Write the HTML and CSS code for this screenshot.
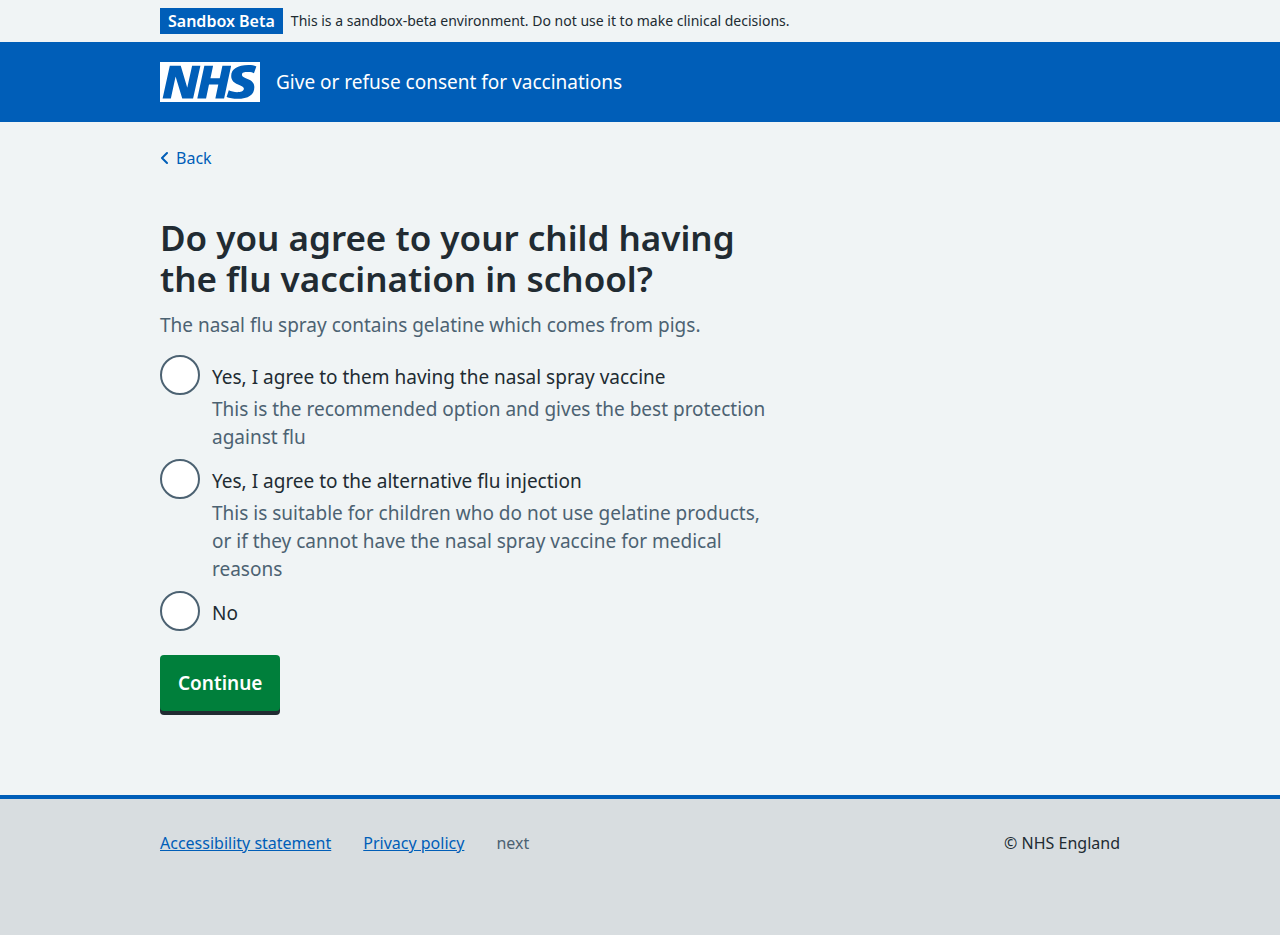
FILE: index.html
```html
<!DOCTYPE html>
<html lang="en">
<head>
<meta charset="utf-8">
<meta name="viewport" content="width=device-width, initial-scale=1">
<title>Give or refuse consent for vaccinations</title>
<link rel="stylesheet" href="styles.css">
</head>
<body>
<aside class="environment">
  <div class="container environment-row">
    <strong class="tag">Sandbox Beta</strong>
    <span>This is a sandbox-beta environment. Do not use it to make clinical decisions.</span>
  </div>
</aside>
<header class="header">
  <div class="container header-row">
    <svg class="logo" viewBox="0 0 200 80" role="img" aria-label="NHS">
      <path fill="#fff" d="M200 0v80H0V0h200Z"/>
      <path fill="#005eb8" d="M192.700 9c-3.600-1.600-8.800-2.800-15.800-2.800-22 0-34.500 8.300-34.500 21.700 0 19 25.400 16.700 25.400 25.300 0 6.100-7.300 7.300-13.500 7.300-5.500 0-12.800-1.700-16.700-3.800l-4.400 13.400c5.300 2.200 14.100 3.600 21.200 3.600 22.700 0 34.300-8.100 34.300-23.700 0-17.500-24.800-15.900-24.800-24.400 0-4.700 4.400-5.500 12.500-5.500 5.800 0 8.900 1 11.500 2.300ZM80.800 7.500H64.200L54.600 51h-.2L41.500 7.500H19.600L5.200 73.200h16.500l9.400-43.600h.2l13.200 43.600h21.700ZM142.300 7.500h-17.500l-5.300 25h-18.600l5.300-25H88.700L74.600 73.200h17.500l5.900-28.200h18.600l-5.900 28.200h17.500Z"/>
    </svg>
    <span class="service">Give or refuse consent for vaccinations</span>
  </div>
</header>
<div class="page">
  <div class="container">
    <a class="back" href="#">
      <svg class="chevron" viewBox="0 0 8 14" aria-hidden="true"><path d="M7 2 2 7l5 5"/></svg>
      Back
    </a>
    <main class="main">
      <form>
        <fieldset class="question" aria-describedby="question-hint">
          <legend><h1>Do you agree to your child having the flu vaccination in school?</h1></legend>
          <p class="hint" id="question-hint">The nasal flu spray contains gelatine which comes from pigs.</p>
          <div class="radios">
            <div class="option">
              <input type="radio" name="consent" id="nasal" aria-describedby="nasal-hint">
              <div class="option-text">
                <label for="nasal">Yes, I agree to them having the nasal spray vaccine</label>
                <p class="hint" id="nasal-hint">This is the recommended option and gives the best protection against flu</p>
              </div>
            </div>
            <div class="option">
              <input type="radio" name="consent" id="injection" aria-describedby="injection-hint">
              <div class="option-text">
                <label for="injection">Yes, I agree to the alternative flu injection</label>
                <p class="hint" id="injection-hint">This is suitable for children who do not use gelatine products, or if they cannot have the nasal spray vaccine for medical reasons</p>
              </div>
            </div>
            <div class="option">
              <input type="radio" name="consent" id="no">
              <div class="option-text"><label for="no">No</label></div>
            </div>
          </div>
        </fieldset>
        <button class="button" type="button">Continue</button>
      </form>
    </main>
  </div>
</div>
<footer class="footer">
  <div class="container footer-row">
    <ul class="footer-links">
      <li><a href="#">Accessibility statement</a></li>
      <li><a href="#">Privacy policy</a></li>
      <li>next</li>
    </ul>
    <p class="copyright">© NHS England</p>
  </div>
</footer>
</body>
</html>
```
FILE: styles.css
```css
* { box-sizing: border-box; }
body {
  margin: 0;
  background: #d8dde0;
  color: #212b32;
  font-family: "Frutiger W01", "Noto Sans", Arial, sans-serif;
  font-size: 19px;
  line-height: 28px;
}
p, h1, ul { margin: 0; }
.container { max-width: 992px; margin: 0 auto; padding: 0 16px; }
.environment { background: #f0f4f5; padding: 8px 0; font-size: 14px; line-height: 24px; }
.environment-row { display: flex; align-items: center; gap: 8px; }
.tag {
  background: #005eb8;
  color: #fff;
  padding: 1px 8px;
  font-size: 16px;
  font-weight: 600;
  white-space: nowrap;
}
.header { background: #005eb8; color: #fff; padding: 20px 0; }
.header-row { display: flex; align-items: center; gap: 16px; }
.logo { display: block; width: 100px; height: 40px; flex: none; }
.page { padding: 24px 0 84px; background: #f0f4f5; }
.back {
  display: flex;
  align-items: center;
  gap: 8px;
  width: fit-content;
  color: #005eb8;
  font-size: 16px;
  line-height: 24px;
  text-decoration: none;
}
.chevron { width: 8px; height: 14px; fill: none; stroke: currentColor; stroke-width: 2; stroke-linecap: round; stroke-linejoin: round; }
.main { max-width: 608px; padding-top: 47px; }
.question { border: 0; margin: 0; padding: 0; min-width: 0; }
.question legend { padding: 0; margin-bottom: 12px; }
h1 { font-size: 35px; line-height: 41px; font-weight: 600; }
.hint { color: #4c6272; }
.radios { display: flex; flex-direction: column; gap: 8px; padding-top: 16px; }
.option { display: flex; gap: 12px; }
.option input {
  appearance: none;
  flex: none;
  width: 40px;
  height: 40px;
  margin: 0;
  border: 2px solid #4c6272;
  border-radius: 50%;
  background: #fff;
}
.option-text { padding-top: 8px; }
.option label { display: block; margin-bottom: 4px; }
.button {
  display: block;
  margin-top: 24px;
  padding: 14px 18px;
  border: 0;
  border-radius: 4px;
  background: #007f3b;
  box-shadow: 0 4px 0 #212b32;
  color: #fff;
  font: inherit;
  font-weight: 600;
}
.footer { border-top: 4px solid #005eb8; padding: 32px 0; font-size: 16px; line-height: 24px; }
.footer-row { display: flex; justify-content: space-between; gap: 32px; }
.footer-links { display: flex; flex-wrap: wrap; gap: 8px 32px; padding: 0; list-style: none; color: #4c6272; }
.footer-links a { color: #005eb8; }
```
